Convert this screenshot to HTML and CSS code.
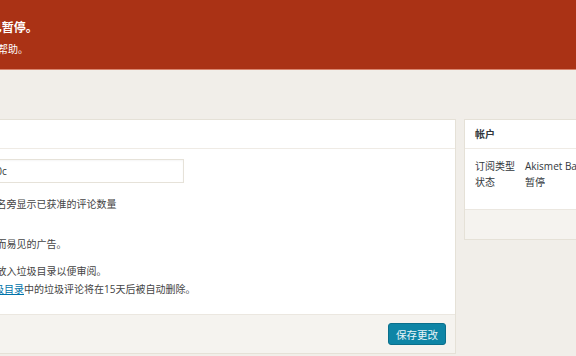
FILE: index.html
```html
<!DOCTYPE html>
<html lang="zh-CN">
<head>
    <meta charset="UTF-8">
    <meta name="viewport" content="width=device-width, initial-scale=1.0">
    <title>Akismet 设置</title>
    <link rel="stylesheet" href="styles.css">
</head>
<body>

    <div class="page">
        <!-- Suspended notice -->
        <div class="notice">
            <h2 class="notice-title">您的 Akismet 订阅已暂停。</h2>
            <p class="notice-text">如有疑问，请联系我们获取帮助。</p>
        </div>

        <div class="columns">
            <!-- Settings card -->
            <div class="card main-card">
                <div class="card-header">
                    <h3>设置</h3>
                </div>
                <form class="settings-form">
                    <div class="field">
                        <label class="field-label" for="api-key">API 密钥</label>
                        <div class="field-control">
                            <input type="text" id="api-key" class="key-input" value="73491582624710c">
                        </div>
                    </div>

                    <div class="field field-comments">
                        <div class="field-label">评论</div>
                        <div class="field-control">
                            <label class="option"><input type="checkbox" checked> 在每个评论者名旁显示已获准的评论数量</label>
                        </div>
                    </div>

                    <div class="field field-strict">
                        <div class="field-label">严格程度</div>
                        <div class="field-control">
                            <label class="option"><input type="radio" name="strict"> 静默丢弃普遍而易见的广告。</label>
                            <label class="option"><input type="radio" name="strict" checked> 总将所有广告放入垃圾目录以便审阅。</label>
                            <p class="note">请您注意：<a href="#">垃圾目录</a>中的垃圾评论将在15天后被自动删除。</p>
                        </div>
                    </div>
                </form>
                <div class="card-footer">
                    <button type="submit" class="button-primary">保存更改</button>
                </div>
            </div>

            <!-- Account card -->
            <div class="card side-card">
                <div class="card-header">
                    <h3>帐户</h3>
                </div>
                <table class="account-table">
                    <tr>
                        <th>订阅类型</th>
                        <td>Akismet Basic</td>
                    </tr>
                    <tr>
                        <th>状态</th>
                        <td>暂停</td>
                    </tr>
                </table>
                <div class="card-footer side-footer"></div>
            </div>
        </div>
    </div>

</body>
</html>
```

FILE: styles.css
```css
body {
    font-family: "Open Sans", "Noto Sans CJK SC", sans-serif;
    font-size: 10px;
    color: #444;
    background-color: #f1eee9;
    margin: 0;
    padding: 0;
    overflow: hidden;
}

.page {
    margin-left: -240px;
    width: 1100px;
}

/* notice banner */
.notice {
    background-color: #aa3215;
    border-bottom: 1px solid #d9866f;
    height: 70px;
    box-sizing: border-box;
    padding: 19px 0 0 126px;
    color: #fff;
}

.notice-title {
    font-size: 12px;
    font-weight: bold;
    line-height: 18px;
    margin: 0;
}

.notice-text {
    font-size: 10px;
    line-height: 16px;
    margin: 4px 0 0 -8px;
}

.columns {
    display: flex;
    align-items: flex-start;
    gap: 8px;
    margin-top: 49px;
}

.card {
    background-color: #fff;
    border: 1px solid #e5e1d7;
    flex-shrink: 0;
}

.main-card {
    width: 694px;
}

.side-card {
    width: 280px;
}

.card-header {
    height: 28px;
    border-bottom: 1px solid #efebe5;
    padding: 0 10px;
}

.card-header h3 {
    margin: 0;
    font-size: 10px;
    font-weight: bold;
    line-height: 28px;
    color: #32373c;
}

/* settings form */
.settings-form {
    padding: 10px 10px 17px;
}

.field {
    display: grid;
    grid-template-columns: 146px 1fr;
}

.field-label {
    font-weight: bold;
    line-height: 24px;
}

.key-input {
    width: 267px;
    height: 24px;
    box-sizing: border-box;
    border: 1px solid #e6e2d9;
    padding: 0 4px;
    font-family: "Open Sans", sans-serif;
    font-size: 10px;
    color: #32373c;
    box-shadow: inset 0 1px 2px rgba(0, 0, 0, 0.04);
}

.option {
    display: block;
    line-height: 16px;
}

.option input {
    width: 13px;
    height: 13px;
    margin: 0 4px 0 0;
    vertical-align: middle;
}

.field-comments {
    margin-top: 13px;
}

.field-strict {
    margin-top: 16px;
}

.field-strict .option + .option {
    margin-top: 11px;
}

.note {
    margin: 2px 0 0;
    padding-left: 17px;
    line-height: 16px;
}

.note a {
    color: #0073aa;
}

.card-footer {
    background-color: #f5f3ef;
    border-top: 1px solid #ebe7e0;
    height: 38px;
    padding: 0 9px;
    display: flex;
    justify-content: flex-end;
    align-items: center;
}

.button-primary {
    background-color: #0e85a6;
    border: 1px solid #0a6f8c;
    border-radius: 3px;
    color: #e8f4f8;
    font-family: "Open Sans", "Noto Sans CJK SC", sans-serif;
    font-size: 10.5px;
    height: 22px;
    padding: 0 7px;
    cursor: pointer;
}

/* account card */
.account-table {
    border-collapse: collapse;
    margin: 9px 10px 19px;
    color: #32373c;
}

.account-table th {
    text-align: left;
    font-weight: normal;
    width: 50px;
    padding: 0;
    line-height: 16px;
}

.account-table td {
    padding: 0;
    line-height: 16px;
    white-space: nowrap;
}

.side-footer {
    height: 29px;
}
```
